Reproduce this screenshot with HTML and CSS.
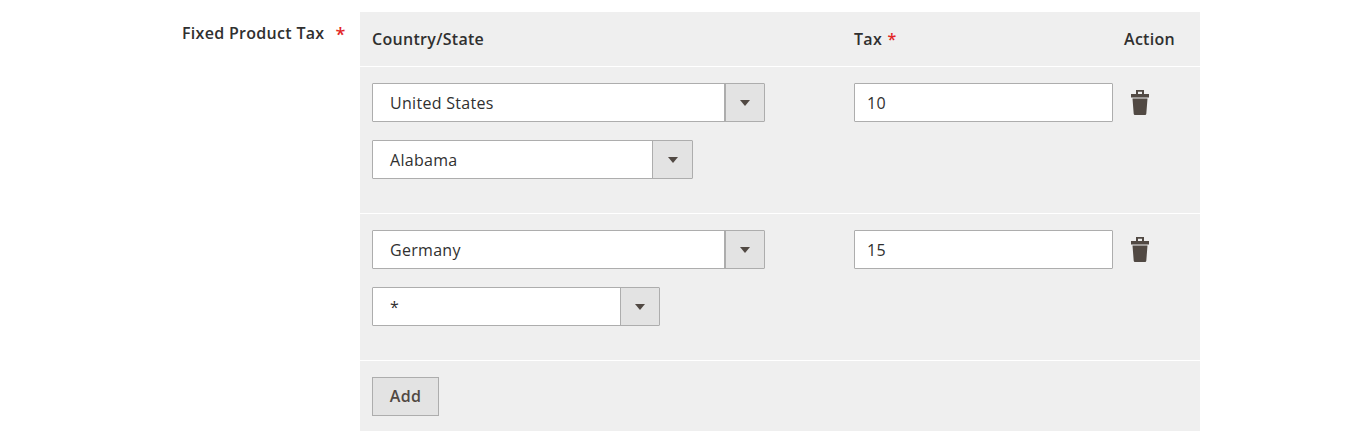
FILE: index.html
```html
<!DOCTYPE html>
<html lang="en">
<head>
<meta charset="utf-8">
<title>Fixed Product Tax</title>
<link rel="stylesheet" href="styles.css">
</head>
<body>
<div class="field">
  <div class="field-label"><span>Fixed Product Tax</span><span class="req">*</span></div>
  <div class="panel">
    <div class="grid-row head">
      <div class="col-country">Country/State</div>
      <div class="col-tax">Tax <span class="req-inline">*</span></div>
      <div class="col-action">Action</div>
    </div>
    <div class="grid-row item">
      <div class="col-country stack">
        <div class="select w-country split"><span class="select-value">United States</span><span class="select-btn"><i class="caret"></i></span></div>
        <div class="select w-alabama"><span class="select-value">Alabama</span><span class="select-btn"><i class="caret"></i></span></div>
      </div>
      <div class="col-tax"><div class="input">10</div></div>
      <div class="col-action">
        <svg class="trash" viewBox="0 0 18 25" aria-hidden="true"><path d="M5 0h8v4h5v3.500H0V4h5zM7 1.800V4h4V1.800zM1.500 8.500h15l-1.200 15.200q-.1 1.300-1.300 1.300H4q-1.200 0-1.300-1.300z" fill-rule="evenodd"/></svg>
      </div>
    </div>
    <div class="grid-row item">
      <div class="col-country stack">
        <div class="select w-country split"><span class="select-value">Germany</span><span class="select-btn"><i class="caret"></i></span></div>
        <div class="select w-star narrow"><span class="select-value">*</span><span class="select-btn"><i class="caret"></i></span></div>
      </div>
      <div class="col-tax"><div class="input">15</div></div>
      <div class="col-action">
        <svg class="trash" viewBox="0 0 18 25" aria-hidden="true"><path d="M5 0h8v4h5v3.500H0V4h5zM7 1.800V4h4V1.800zM1.500 8.500h15l-1.200 15.200q-.1 1.300-1.300 1.300H4q-1.200 0-1.300-1.300z" fill-rule="evenodd"/></svg>
      </div>
    </div>
    <div class="foot"><button class="add" type="button">Add</button></div>
  </div>
</div>
</body>
</html>
```

FILE: styles.css
```css
html, body {
  margin: 0;
  padding: 0;
  background: #fff;
}
body {
  font-family: "Open Sans", "Noto Sans", sans-serif;
  font-size: 16px;
  letter-spacing: 0.3px;
  color: #303030;
  height: 440px;
  overflow: hidden;
}
.field {
  display: flex;
  padding: 12px 150px 0 182px;
}
.field-label {
  width: 178px;
  flex: none;
  display: flex;
  align-items: flex-start;
  font-weight: 600;
  line-height: 20px;
  padding-top: 11px;
  box-sizing: border-box;
}
.req {
  color: #e22626;
  margin-left: 11px;
  padding-top: 1px;
  font-size: 18px;
}
.panel {
  width: 840px;
  background: #efefef;
}
.grid-row {
  display: grid;
  grid-template-columns: 482px 270px 1fr;
  padding: 0 12px;
  border-bottom: 1px solid #fff;
}
.head {
  height: 54px;
  align-items: center;
  font-weight: 600;
}
.req-inline {
  color: #e22626;
  margin-left: 1px;
}
.item {
  padding-top: 16px;
  height: 130px;
}
.stack {
  display: flex;
  flex-direction: column;
  align-items: flex-start;
  gap: 18px;
}
.select {
  display: flex;
  height: 39px;
  box-sizing: border-box;
  border: 1px solid #adadad;
  border-radius: 1px;
  background: #fff;
}
.w-country { width: 393px; }
.w-alabama { width: 321px; }
.w-star { width: 288px; }
.select-value {
  flex: 1;
  padding: 1px 0 0 17px;
  line-height: 37px;
}
.select-btn {
  flex: none;
  width: 40px;
  box-sizing: border-box;
  background: #e3e3e3;
  border-left: 1px solid #adadad;
  display: flex;
  align-items: center;
  justify-content: center;
}
.split .select-btn {
  border-left-width: 2px;
}
.narrow .select-btn {
  width: 39px;
}
.caret {
  display: block;
  width: 0;
  height: 0;
  margin-top: 1px;
  border-style: solid;
  border-width: 6px 5px 0;
  border-color: #514943 transparent transparent;
}
.input {
  width: 259px;
  height: 39px;
  box-sizing: border-box;
  border: 1px solid #adadad;
  border-radius: 1px;
  background: #fff;
  line-height: 37px;
  padding: 1px 0 0 12px;
}
.trash {
  display: block;
  width: 18px;
  height: 25px;
  margin: 7px 0 0 7px;
  fill: #514943;
}
.foot {
  padding: 16px 12px 15px;
}
.add {
  display: block;
  width: 67px;
  height: 39px;
  padding: 0 0 2px;
  background: #e3e3e3;
  border: 1px solid #adadad;
  border-radius: 0;
  color: #514943;
  font-family: inherit;
  font-size: 16px;
  font-weight: 600;
  letter-spacing: 0.3px;
}
```
